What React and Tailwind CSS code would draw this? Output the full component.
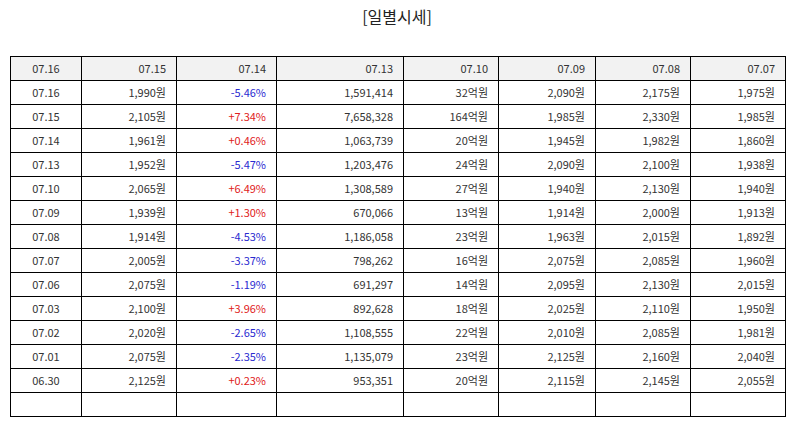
const header = ['07.16', '07.15', '07.14', '07.13', '07.10', '07.09', '07.08', '07.07'];

const rows = [
  ['07.16', '1,990원', '-5.46%', '1,591,414', '32억원', '2,090원', '2,175원', '1,975원'],
  ['07.15', '2,105원', '+7.34%', '7,658,328', '164억원', '1,985원', '2,330원', '1,985원'],
  ['07.14', '1,961원', '+0.46%', '1,063,739', '20억원', '1,945원', '1,982원', '1,860원'],
  ['07.13', '1,952원', '-5.47%', '1,203,476', '24억원', '2,090원', '2,100원', '1,938원'],
  ['07.10', '2,065원', '+6.49%', '1,308,589', '27억원', '1,940원', '2,130원', '1,940원'],
  ['07.09', '1,939원', '+1.30%', '670,066', '13억원', '1,914원', '2,000원', '1,913원'],
  ['07.08', '1,914원', '-4.53%', '1,186,058', '23억원', '1,963원', '2,015원', '1,892원'],
  ['07.07', '2,005원', '-3.37%', '798,262', '16억원', '2,075원', '2,085원', '1,960원'],
  ['07.06', '2,075원', '-1.19%', '691,297', '14억원', '2,095원', '2,130원', '2,015원'],
  ['07.03', '2,100원', '+3.96%', '892,628', '18억원', '2,025원', '2,110원', '1,950원'],
  ['07.02', '2,020원', '-2.65%', '1,108,555', '22억원', '2,010원', '2,085원', '1,981원'],
  ['07.01', '2,075원', '-2.35%', '1,135,079', '23억원', '2,125원', '2,160원', '2,040원'],
  ['06.30', '2,125원', '+0.23%', '953,351', '20억원', '2,115원', '2,145원', '2,055원'],
  ['', '', '', '', '', '', '', ''],
];

const widths = ['w-[71px]', 'w-[95px]', 'w-[100px]', 'w-[127px]', 'w-[95px]', 'w-[97px]', 'w-[95px]', 'w-[95px]'];

const cellBase = 'h-[24px] border border-black px-[10px] leading-none';

export default function App() {
  const changeColor = (v) => {
    if (v.startsWith('+')) return 'text-[#e02020]';
    if (v.startsWith('-')) return 'text-[#2a2ad0]';
    return '';
  };

  return (
    <div className="bg-white w-[794px] h-[425px] text-[#333] font-['Noto_Sans_CJK_KR','Noto_Sans',sans-serif]">
      {/* Title */}
      <h2 className="pt-[6px] text-center text-[16px] leading-[21px] text-[#222]">[일별시세]</h2>

      <div className="px-[10px] mt-[29px]">
        <table className="border-collapse table-fixed w-[775px] text-[11px]">
          <colgroup>
            {widths.map((w, i) => (
              <col key={i} className={w} />
            ))}
          </colgroup>
          <thead>
            <tr className="bg-[#f2f2f2]">
              {header.map((h, i) => (
                <th key={i} className={`${cellBase} font-normal ${i === 0 ? 'text-center' : 'text-right'}`}>
                  {h}
                </th>
              ))}
            </tr>
          </thead>
          <tbody>
            {rows.map((r, ri) => (
              <tr key={ri}>
                {r.map((c, ci) => (
                  <td
                    key={ci}
                    className={`${cellBase} ${ci === 0 ? 'text-center' : 'text-right'} ${ci === 2 ? changeColor(c) : ''}`}
                  >
                    {c}
                  </td>
                ))}
              </tr>
            ))}
          </tbody>
        </table>
      </div>
    </div>
  );
}
